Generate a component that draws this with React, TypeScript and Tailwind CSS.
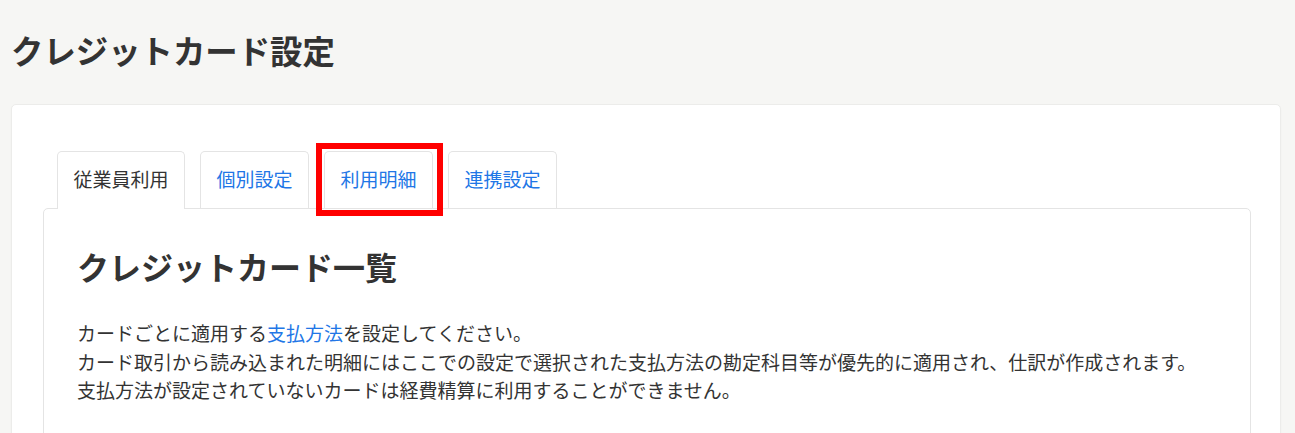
const tabs = [
  { label: "従業員利用", active: true },
  { label: "個別設定" },
  { label: "利用明細", marked: true },
  { label: "連携設定" },
];

export default function App() {
  return (
    <div className="min-h-screen bg-[#f6f6f4] pt-[26px] pl-[11px] pr-[14px] text-[#333] font-['Noto_Sans_CJK_JP','Noto_Sans',sans-serif]">
      <h1 className="text-[32.4px] font-bold leading-[48px] mb-[30px]">クレジットカード設定</h1>

      <div className="bg-white border border-[#ececea] rounded-[5px] shadow-[0_1px_2px_rgba(0,0,0,0.03)] pt-[46px] pl-[31px] pr-[29px] pb-[40px]">
        {/* Tabs */}
        <div className="flex items-end pl-[14px]">
          {tabs.map((t) => (
            <div
              key={t.label}
              className={`relative mr-[15px] px-[15.5px] pt-[13px] rounded-t-[5px] border border-b-0 border-[#e4e4e4] text-[19px] leading-[28.8px] ${
                t.active
                  ? "bg-white text-[#333] pb-[15px] -mb-px z-10"
                  : "bg-white text-[#2176e6] pb-[14px]"
              }`}
            >
              {t.label}
              {t.marked && (
                <span className="absolute -left-[9px] -right-[11px] -top-[9px] -bottom-[8px] border-[6px] border-[#ff0000] pointer-events-none" />
              )}
            </div>
          ))}
        </div>

        {/* Panel */}
        <div className="border border-[#e4e4e4] rounded-[5px] bg-white pt-[33px] px-[33px] pb-[60px]">
          <h2 className="text-[32px] font-bold leading-[48px] mb-[29px]">クレジットカード一覧</h2>
          <div className="text-[19px] leading-[28.8px]">
            <p>
              カードごとに適用する<span className="text-[#2176e6]">支払方法</span>を設定してください。
            </p>
            <p>
              カード取引から読み込まれた明細にはここでの設定で選択された支払方法の勘定科目等が優先的に適用され、仕訳が作成されます。
            </p>
            <p>支払方法が設定されていないカードは経費精算に利用することができません。</p>
          </div>
        </div>
      </div>
    </div>
  );
}
